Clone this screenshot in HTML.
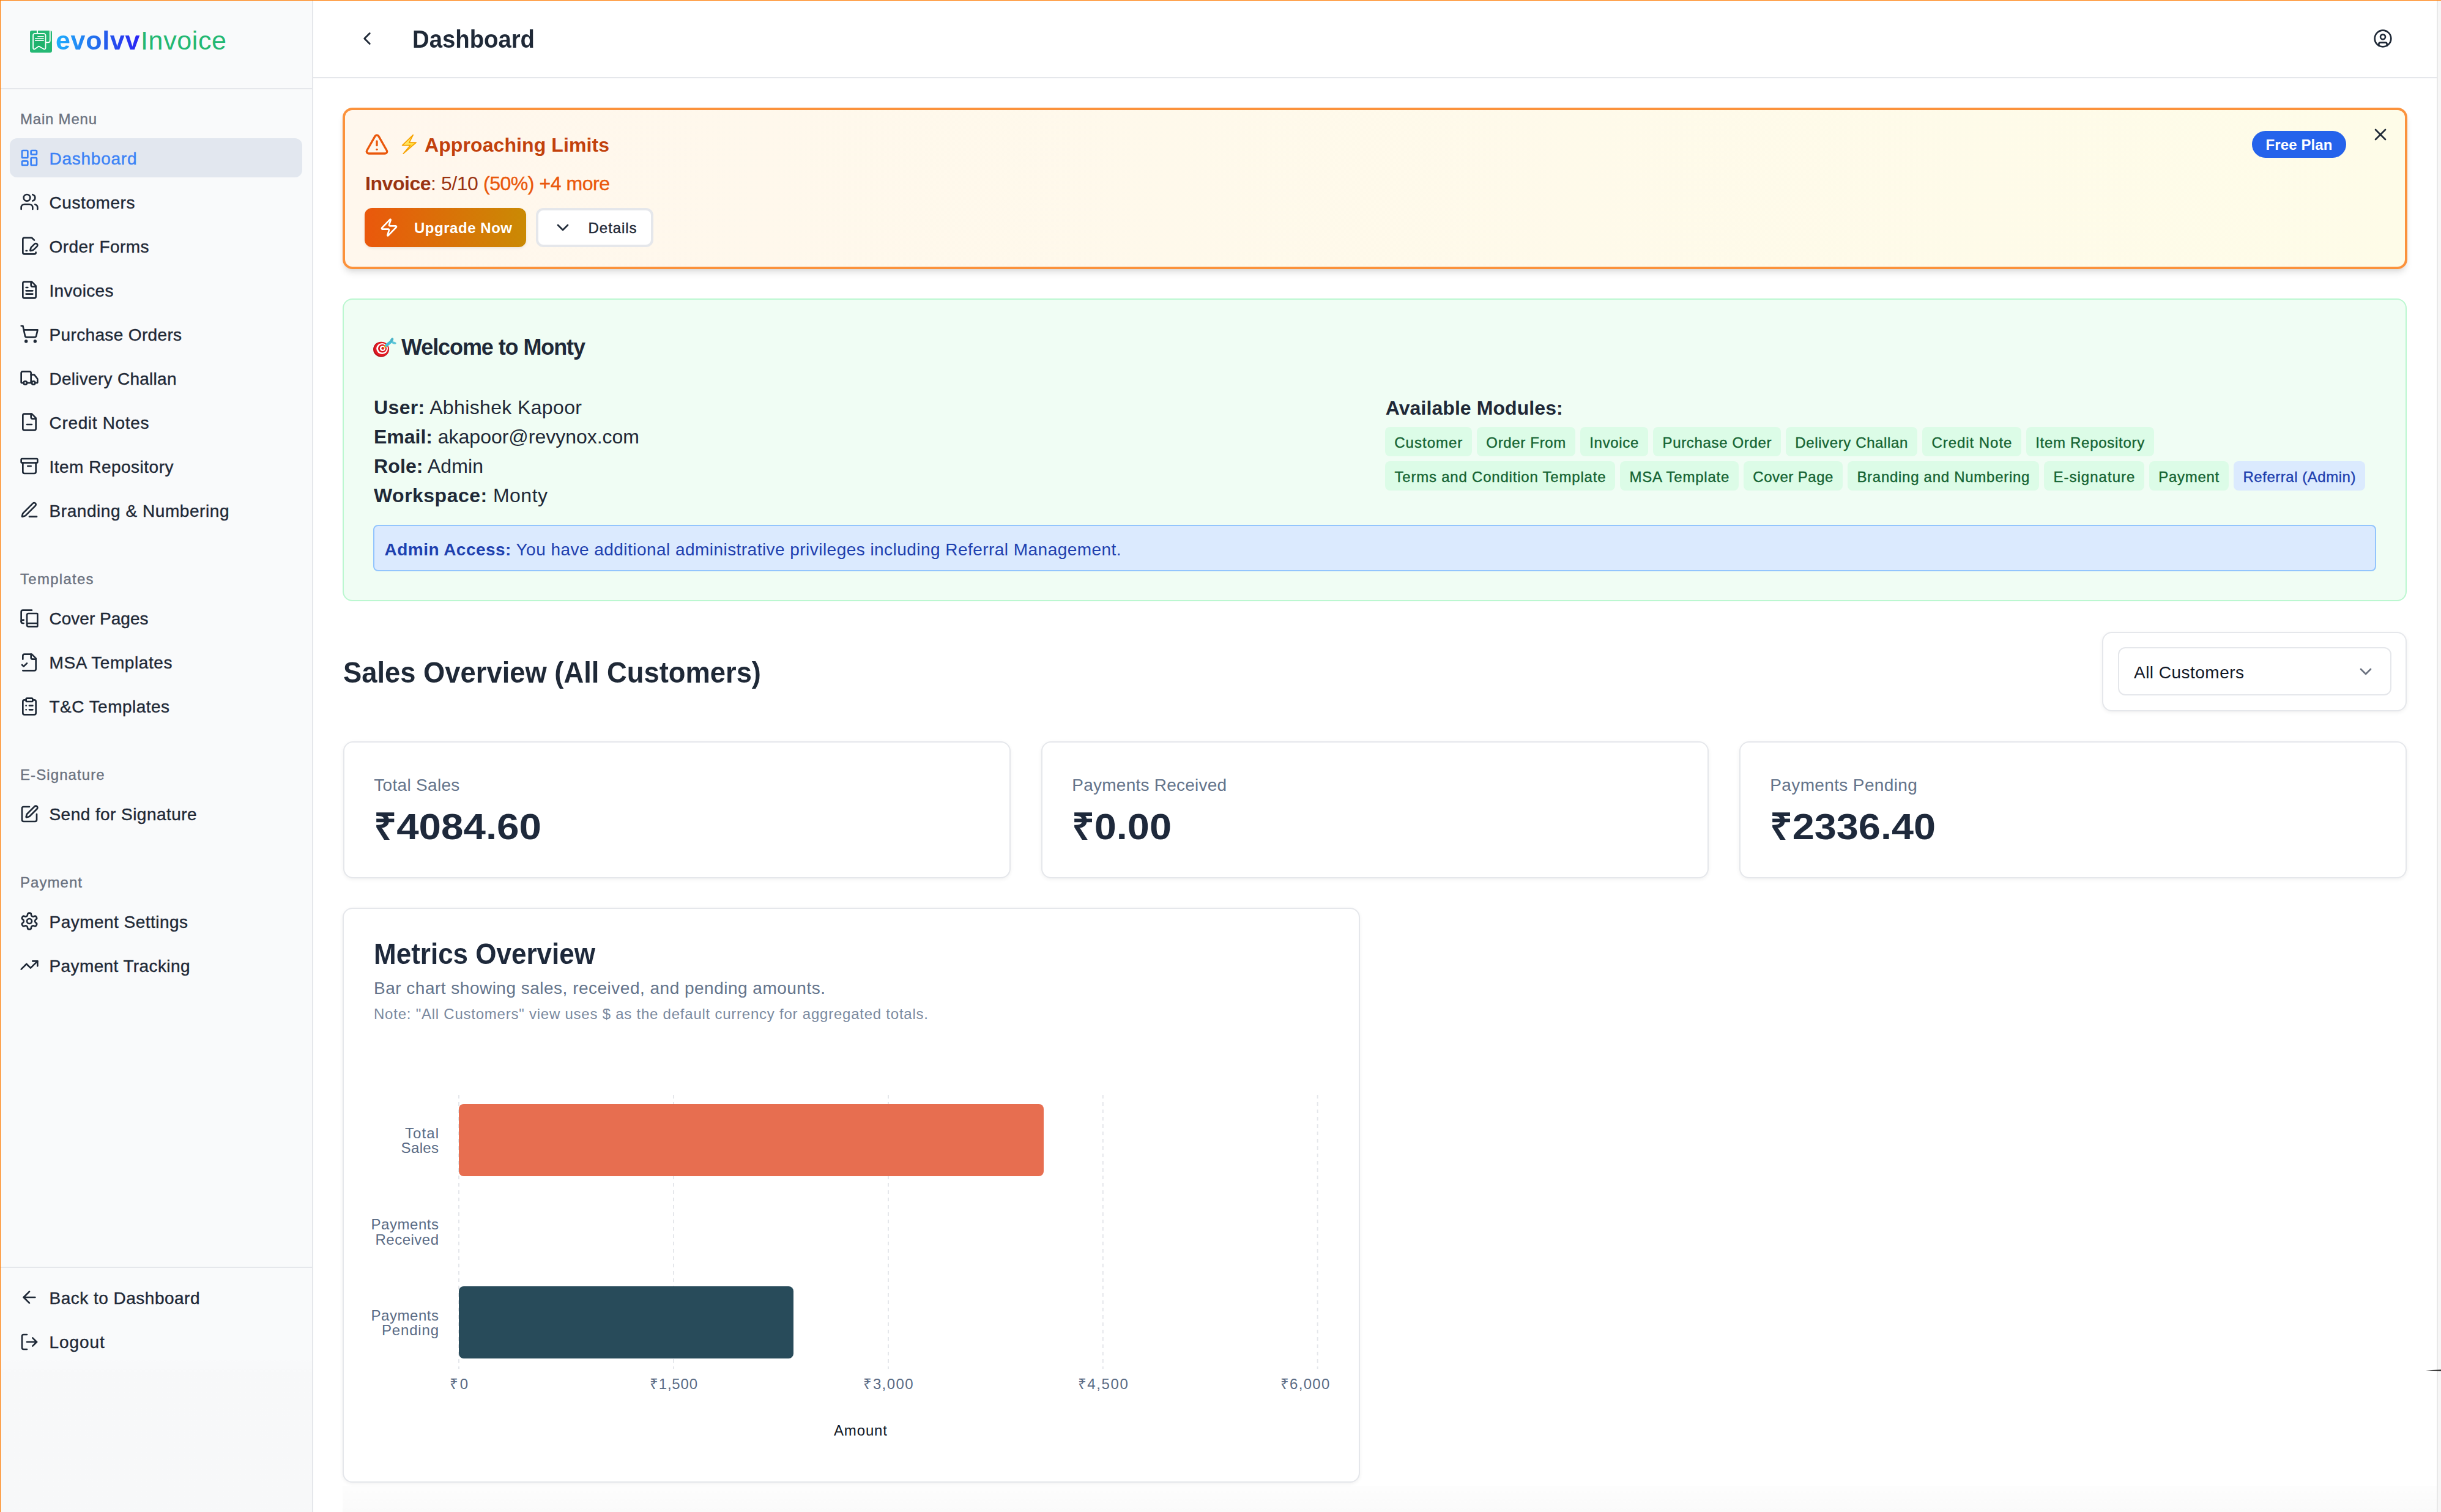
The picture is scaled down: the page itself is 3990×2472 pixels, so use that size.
<!DOCTYPE html>
<html><head><meta charset="utf-8"><title>Dashboard</title>
<style>
html,body{margin:0;padding:0;width:3990px;height:2472px;overflow:hidden;background:#fff}
body{position:relative;font-family:"Liberation Sans", sans-serif}
.a{position:absolute;display:block}
.t{position:absolute;white-space:nowrap}
b{font-weight:700}
@media (max-width:2600px){html{zoom:0.5}}
</style></head><body>
<div class="a" style="left:0px;top:0px;width:3990px;height:2472px;background:#ffffff"></div>
<div class="a" style="left:1px;top:1px;width:509px;height:2471px;background:#f9fafb"></div>
<div class="a" style="left:510px;top:1px;width:2px;height:2471px;background:#e5e7eb"></div>
<div class="a" style="left:1px;top:144px;width:509px;height:2px;background:#e5e7eb"></div>
<div class="a" style="left:1px;top:2071px;width:509px;height:2px;background:#e5e7eb"></div>
<div class="a" style="left:512px;top:126px;width:3471px;height:2px;background:#e5e7eb"></div>
<div class="a" style="left:3983px;top:1px;width:2px;height:2471px;background:#e8e8e8"></div>
<div class="a" style="left:3985px;top:1px;width:5px;height:2471px;background:#f6f6f6"></div>
<svg class="a" style="left:49px;top:50px" width="36" height="36" viewBox="0 0 36 36">
<rect x="0" y="0" width="36" height="36" rx="3.2" fill="#25b874"/>
<path d="M12 0 V4.6" stroke="#fff" stroke-width="1.9" fill="none"/>
<path d="M32.8 0 V16.2 A3.2 3.2 0 0 1 29.6 19.4 H25.6" stroke="#fff" stroke-width="1.8" fill="none"/>
<path d="M5.1 28.6 V8 A3.1 3.1 0 0 1 8.2 4.9 H22.4 A3.1 3.1 0 0 1 25.5 8 V28.6 A1.8 1.8 0 0 1 22.8 30.2 L14.3 25.6 L7.8 30.2 A1.8 1.8 0 0 1 5.1 28.6 Z" stroke="#fff" stroke-width="1.75" fill="#1fb26c" stroke-linejoin="round"/>
<path d="M12.8 9.6 H22.2 M8.6 12.8 H22.2 M8.6 16.2 H22.2" stroke="#fff" stroke-width="1.4" stroke-linecap="round"/>
</svg>
<div class="t" style="left:91px;top:36px;font-size:43px;line-height:60px;white-space:nowrap"><span style="font-weight:700;letter-spacing:0.7px;background:linear-gradient(90deg,#1fb0fe,#2563eb 55%,#2a22f5);-webkit-background-clip:text;background-clip:text;color:transparent">evolvv</span><span style="color:#23b873;letter-spacing:0.6px;margin-left:1px">Invoice</span></div>
<div class="t" id="t1" data-w="123" style="top:177.70px;font-size:24px;line-height:34px;color:#6b7280;left:33px;transform-origin:left center;letter-spacing:0.783px;-webkit-text-stroke-width:0.4px">Main Menu</div>
<div class="a" style="left:16px;top:226px;width:478px;height:64px;background:#e2e7ef;border-radius:12px"></div>
<svg class="a" style="left:32.00px;top:242.00px" width="32" height="32" viewBox="0 0 24 24" fill="none" stroke="#3b82f6" stroke-width="2" stroke-linecap="round" stroke-linejoin="round"><rect width="7" height="9" x="3" y="3" rx="1"/><rect width="7" height="5" x="14" y="3" rx="1"/><rect width="7" height="9" x="14" y="12" rx="1"/><rect width="7" height="5" x="3" y="16" rx="1"/></svg>
<div class="t" id="t2" data-w="141" style="top:239.50px;font-size:28px;line-height:39px;color:#3b82f6;left:80.5px;transform-origin:left center;letter-spacing:0.752px;-webkit-text-stroke-width:0.4px">Dashboard</div>
<svg class="a" style="left:32.00px;top:314.00px" width="32" height="32" viewBox="0 0 24 24" fill="none" stroke="#1f2937" stroke-width="2" stroke-linecap="round" stroke-linejoin="round"><path d="M16 21v-2a4 4 0 0 0-4-4H6a4 4 0 0 0-4 4v2"/><circle cx="9" cy="7" r="4"/><path d="M22 21v-2a4 4 0 0 0-3-3.87"/><path d="M16 3.13a4 4 0 0 1 0 7.75"/></svg>
<div class="t" id="t3" data-w="138" style="top:311.50px;font-size:28px;line-height:39px;color:#1f2937;left:80.5px;transform-origin:left center;letter-spacing:0.578px;-webkit-text-stroke-width:0.4px">Customers</div>
<svg class="a" style="left:32.00px;top:386.00px" width="32" height="32" viewBox="0 0 24 24" fill="none" stroke="#1f2937" stroke-width="2" stroke-linecap="round" stroke-linejoin="round"><path d="m18 5-2.414-2.414A2 2 0 0 0 14.172 2H6a2 2 0 0 0-2 2v16a2 2 0 0 0 2 2h12a2 2 0 0 0 2-2"/><path d="M21.378 12.626a1 1 0 0 0-3.004-3.004l-4.01 4.012a2 2 0 0 0-.506.854l-.837 2.87a.5.5 0 0 0 .62.62l2.87-.837a2 2 0 0 0 .854-.506z"/><path d="M8 18h1"/></svg>
<div class="t" id="t4" data-w="161" style="top:383.50px;font-size:28px;line-height:39px;color:#1f2937;left:80.5px;transform-origin:left center;letter-spacing:0.431px;-webkit-text-stroke-width:0.4px">Order Forms</div>
<svg class="a" style="left:32.00px;top:458.00px" width="32" height="32" viewBox="0 0 24 24" fill="none" stroke="#1f2937" stroke-width="2" stroke-linecap="round" stroke-linejoin="round"><path d="M15 2H6a2 2 0 0 0-2 2v16a2 2 0 0 0 2 2h12a2 2 0 0 0 2-2V7Z"/><path d="M14 2v4a2 2 0 0 0 2 2h4"/><path d="M10 9H8"/><path d="M16 13H8"/><path d="M16 17H8"/></svg>
<div class="t" id="t5" data-w="103" style="top:455.50px;font-size:28px;line-height:39px;color:#1f2937;left:80.5px;transform-origin:left center;letter-spacing:0.326px;-webkit-text-stroke-width:0.4px">Invoices</div>
<svg class="a" style="left:32.00px;top:530.00px" width="32" height="32" viewBox="0 0 24 24" fill="none" stroke="#1f2937" stroke-width="2" stroke-linecap="round" stroke-linejoin="round"><circle cx="8" cy="21" r="1"/><circle cx="19" cy="21" r="1"/><path d="M2.05 2.05h2l2.66 12.42a2 2 0 0 0 2 1.58h9.78a2 2 0 0 0 1.95-1.57l1.65-7.43H5.12"/></svg>
<div class="t" id="t6" data-w="214.6" style="top:527.50px;font-size:28px;line-height:39px;color:#1f2937;left:80.5px;transform-origin:left center;letter-spacing:0.354px;-webkit-text-stroke-width:0.4px">Purchase Orders</div>
<svg class="a" style="left:32.00px;top:602.00px" width="32" height="32" viewBox="0 0 24 24" fill="none" stroke="#1f2937" stroke-width="2" stroke-linecap="round" stroke-linejoin="round"><path d="M14 18V6a2 2 0 0 0-2-2H4a2 2 0 0 0-2 2v11a1 1 0 0 0 1 1h2"/><path d="M15 18H9"/><path d="M19 18h2a1 1 0 0 0 1-1v-3.65a1 1 0 0 0-.22-.624l-3.48-4.35A1 1 0 0 0 17.52 8H14"/><circle cx="17" cy="18" r="2"/><circle cx="7" cy="18" r="2"/></svg>
<div class="t" id="t7" data-w="206" style="top:599.50px;font-size:28px;line-height:39px;color:#1f2937;left:80.5px;transform-origin:left center;letter-spacing:0.275px;-webkit-text-stroke-width:0.4px">Delivery Challan</div>
<svg class="a" style="left:32.00px;top:674.00px" width="32" height="32" viewBox="0 0 24 24" fill="none" stroke="#1f2937" stroke-width="2" stroke-linecap="round" stroke-linejoin="round"><path d="M15 2H6a2 2 0 0 0-2 2v16a2 2 0 0 0 2 2h12a2 2 0 0 0 2-2V7Z"/><path d="M14 2v4a2 2 0 0 0 2 2h4"/><path d="M9 15h6"/></svg>
<div class="t" id="t8" data-w="161" style="top:671.50px;font-size:28px;line-height:39px;color:#1f2937;left:80.5px;transform-origin:left center;letter-spacing:0.670px;-webkit-text-stroke-width:0.4px">Credit Notes</div>
<svg class="a" style="left:32.00px;top:746.00px" width="32" height="32" viewBox="0 0 24 24" fill="none" stroke="#1f2937" stroke-width="2" stroke-linecap="round" stroke-linejoin="round"><rect width="20" height="5" x="2" y="3" rx="1"/><path d="M4 8v11a2 2 0 0 0 2 2h12a2 2 0 0 0 2-2V8"/><path d="M10 12h4"/></svg>
<div class="t" id="t9" data-w="201" style="top:743.50px;font-size:28px;line-height:39px;color:#1f2937;left:80.5px;transform-origin:left center;letter-spacing:0.494px;-webkit-text-stroke-width:0.4px">Item Repository</div>
<svg class="a" style="left:32.00px;top:818.00px" width="32" height="32" viewBox="0 0 24 24" fill="none" stroke="#1f2937" stroke-width="2" stroke-linecap="round" stroke-linejoin="round"><path d="M12 20h9"/><path d="M16.376 3.622a1 1 0 0 1 3.002 3.002L7.368 18.635a2 2 0 0 1-.855.506l-2.872.838a.5.5 0 0 1-.62-.62l.838-2.872a2 2 0 0 1 .506-.854z"/></svg>
<div class="t" id="t10" data-w="292" style="top:815.50px;font-size:28px;line-height:39px;color:#1f2937;left:80.5px;transform-origin:left center;letter-spacing:0.564px;-webkit-text-stroke-width:0.4px">Branding &amp; Numbering</div>
<div class="t" id="t11" data-w="117.6" style="top:930.00px;font-size:24px;line-height:34px;color:#6b7280;left:33px;transform-origin:left center;letter-spacing:1.276px;-webkit-text-stroke-width:0.4px">Templates</div>
<svg class="a" style="left:32.00px;top:994.90px" width="32" height="32" viewBox="0 0 24 24" fill="none" stroke="#1f2937" stroke-width="2" stroke-linecap="round" stroke-linejoin="round"><path d="M2 16V4a2 2 0 0 1 2-2h11"/><path d="M5 14H4a2 2 0 1 0 0 4h1"/><path d="M22 18H11a2 2 0 1 0 0 4h10.5a.5.5 0 0 0 .5-.5v-15a.5.5 0 0 0-.5-.5H11a2 2 0 0 0-2 2v12"/></svg>
<div class="t" id="t12" data-w="160" style="top:992.40px;font-size:28px;line-height:39px;color:#1f2937;left:80.5px;transform-origin:left center;letter-spacing:0.013px;-webkit-text-stroke-width:0.4px">Cover Pages</div>
<svg class="a" style="left:32.00px;top:1066.90px" width="32" height="32" viewBox="0 0 24 24" fill="none" stroke="#1f2937" stroke-width="2" stroke-linecap="round" stroke-linejoin="round"><path d="M4 22h14a2 2 0 0 0 2-2V7l-5-5H6a2 2 0 0 0-2 2v4"/><path d="M14 2v4a2 2 0 0 0 2 2h4"/><path d="m3 15 2 2 4-4"/></svg>
<div class="t" id="t13" data-w="199" style="top:1064.40px;font-size:28px;line-height:39px;color:#1f2937;left:80.5px;transform-origin:left center;letter-spacing:0.581px;-webkit-text-stroke-width:0.4px">MSA Templates</div>
<svg class="a" style="left:32.00px;top:1138.90px" width="32" height="32" viewBox="0 0 24 24" fill="none" stroke="#1f2937" stroke-width="2" stroke-linecap="round" stroke-linejoin="round"><rect width="8" height="4" x="8" y="2" rx="1" ry="1"/><path d="M16 4h2a2 2 0 0 1 2 2v14a2 2 0 0 1-2 2H6a2 2 0 0 1-2-2V6a2 2 0 0 1 2-2h2"/><path d="M12 11h4"/><path d="M12 16h4"/><path d="M8 11h.01"/><path d="M8 16h.01"/></svg>
<div class="t" id="t14" data-w="194.5" style="top:1136.40px;font-size:28px;line-height:39px;color:#1f2937;left:80.5px;transform-origin:left center;letter-spacing:0.467px;-webkit-text-stroke-width:0.4px">T&amp;C Templates</div>
<div class="t" id="t15" data-w="135.7" style="top:1250.10px;font-size:24px;line-height:34px;color:#6b7280;left:33px;transform-origin:left center;letter-spacing:1.095px;-webkit-text-stroke-width:0.4px">E-Signature</div>
<svg class="a" style="left:32.00px;top:1314.50px" width="32" height="32" viewBox="0 0 24 24" fill="none" stroke="#1f2937" stroke-width="2" stroke-linecap="round" stroke-linejoin="round"><path d="M12 3H5a2 2 0 0 0-2 2v14a2 2 0 0 0 2 2h14a2 2 0 0 0 2-2v-7"/><path d="M18.375 2.625a1 1 0 0 1 3 3l-9.013 9.014a2 2 0 0 1-.853.505l-2.873.84a.5.5 0 0 1-.62-.62l.84-2.873a2 2 0 0 1 .506-.852z"/></svg>
<div class="t" id="t16" data-w="239" style="top:1312.00px;font-size:28px;line-height:39px;color:#1f2937;left:80.5px;transform-origin:left center;letter-spacing:0.441px;-webkit-text-stroke-width:0.4px">Send for Signature</div>
<div class="t" id="t17" data-w="99" style="top:1425.90px;font-size:24px;line-height:34px;color:#6b7280;left:33px;transform-origin:left center;letter-spacing:1.047px;-webkit-text-stroke-width:0.4px">Payment</div>
<svg class="a" style="left:32.00px;top:1490.40px" width="32" height="32" viewBox="0 0 24 24" fill="none" stroke="#1f2937" stroke-width="2" stroke-linecap="round" stroke-linejoin="round"><path d="M12.22 2h-.44a2 2 0 0 0-2 2v.18a2 2 0 0 1-1 1.73l-.43.25a2 2 0 0 1-2 0l-.15-.08a2 2 0 0 0-2.73.73l-.22.38a2 2 0 0 0 .73 2.73l.15.1a2 2 0 0 1 1 1.72v.51a2 2 0 0 1-1 1.74l-.15.09a2 2 0 0 0-.73 2.73l.22.38a2 2 0 0 0 2.73.73l.15-.08a2 2 0 0 1 2 0l.43.25a2 2 0 0 1 1 1.73V20a2 2 0 0 0 2 2h.44a2 2 0 0 0 2-2v-.18a2 2 0 0 1 1-1.73l.43-.25a2 2 0 0 1 2 0l.15.08a2 2 0 0 0 2.73-.73l.22-.39a2 2 0 0 0-.73-2.73l-.15-.08a2 2 0 0 1-1-1.74v-.5a2 2 0 0 1 1-1.74l.15-.09a2 2 0 0 0 .73-2.73l-.22-.38a2 2 0 0 0-2.73-.73l-.15.08a2 2 0 0 1-2 0l-.43-.25a2 2 0 0 1-1-1.73V4a2 2 0 0 0-2-2z"/><circle cx="12" cy="12" r="3"/></svg>
<div class="t" id="t18" data-w="224.6" style="top:1487.90px;font-size:28px;line-height:39px;color:#1f2937;left:80.5px;transform-origin:left center;letter-spacing:0.476px;-webkit-text-stroke-width:0.4px">Payment Settings</div>
<svg class="a" style="left:32.00px;top:1562.40px" width="32" height="32" viewBox="0 0 24 24" fill="none" stroke="#1f2937" stroke-width="2" stroke-linecap="round" stroke-linejoin="round"><polyline points="22 7 13.5 15.5 8.5 10.5 2 17"/><polyline points="16 7 22 7 22 13"/></svg>
<div class="t" id="t19" data-w="228" style="top:1559.90px;font-size:28px;line-height:39px;color:#1f2937;left:80.5px;transform-origin:left center;letter-spacing:0.393px;-webkit-text-stroke-width:0.4px">Payment Tracking</div>
<svg class="a" style="left:32.00px;top:2105.40px" width="32" height="32" viewBox="0 0 24 24" fill="none" stroke="#1f2937" stroke-width="2" stroke-linecap="round" stroke-linejoin="round"><path d="m12 19-7-7 7-7"/><path d="M19 12H5"/></svg>
<div class="t" id="t20" data-w="244" style="top:2102.90px;font-size:28px;line-height:39px;color:#1f2937;left:80.5px;transform-origin:left center;letter-spacing:0.491px;-webkit-text-stroke-width:0.4px">Back to Dashboard</div>
<svg class="a" style="left:32.00px;top:2177.70px" width="32" height="32" viewBox="0 0 24 24" fill="none" stroke="#1f2937" stroke-width="2" stroke-linecap="round" stroke-linejoin="round"><path d="M9 21H5a2 2 0 0 1-2-2V5a2 2 0 0 1 2-2h4"/><polyline points="16 17 21 12 16 7"/><line x1="21" x2="9" y1="12" y2="12"/></svg>
<div class="t" id="t21" data-w="88.4" style="top:2175.20px;font-size:28px;line-height:39px;color:#1f2937;left:80.5px;transform-origin:left center;letter-spacing:0.952px;-webkit-text-stroke-width:0.4px">Logout</div>
<svg class="a" style="left:583.00px;top:46.00px" width="34" height="34" viewBox="0 0 24 24" fill="none" stroke="#1f2937" stroke-width="2" stroke-linecap="round" stroke-linejoin="round"><path d="m15 18-6-6 6-6"/></svg>
<div class="t" id="t22" data-w="198" style="top:36.00px;font-size:40px;line-height:56px;color:#1f2937;font-weight:700;left:674px;transform-origin:left center;transform:scaleX(0.9572)">Dashboard</div>
<svg class="a" style="left:3879.00px;top:46.60px" width="32" height="32" viewBox="0 0 24 24" fill="none" stroke="#1f2937" stroke-width="2" stroke-linecap="round" stroke-linejoin="round"><circle cx="12" cy="12" r="10"/><circle cx="12" cy="10" r="3"/><path d="M7 20.662V19a2 2 0 0 1 2-2h6a2 2 0 0 1 2 2v1.662"/></svg>
<div class="a" style="left:560px;top:176px;width:3375px;height:264px;background:linear-gradient(90deg,#fff7ed,#fefce8);border:4px solid #fb923c;border-radius:16px;box-sizing:border-box;box-shadow:0 8px 12px -2px rgba(0,0,0,0.1), 0 4px 8px -4px rgba(0,0,0,0.1)"></div>
<svg class="a" style="left:595.50px;top:216.00px" width="40" height="40" viewBox="0 0 24 24" fill="none" stroke="#ea580c" stroke-width="2" stroke-linecap="round" stroke-linejoin="round"><path d="m21.73 18-8-14a2 2 0 0 0-3.48 0l-8 14A2 2 0 0 0 4 21h16a2 2 0 0 0 1.73-3"/><path d="M12 9v4"/><path d="M12 17h.01"/></svg>
<svg class="a" style="left:655px;top:219px" width="28" height="34" viewBox="0 0 28 34">
<defs><linearGradient id="zg" x1="0" y1="0" x2="1" y2="1"><stop offset="0" stop-color="#fff3b0"/><stop offset="0.5" stop-color="#ffe14d"/><stop offset="1" stop-color="#ffc400"/></linearGradient></defs>
<path d="M20.2 1.6 L2.6 18.7 L15.6 18.7 L4.2 32.2 L25.1 14.1 L13.9 14.1 Z" fill="url(#zg)" stroke="#f7a300" stroke-width="1.7" stroke-linejoin="round"/>
</svg>
<div class="t" id="t23" data-w="300" style="top:214.60px;font-size:32px;line-height:45px;color:#c2410c;font-weight:700;left:694px;transform-origin:left center;letter-spacing:0.091px">Approaching Limits</div>
<div class="t" id="t24" data-w="398" style="top:278.30px;font-size:32px;line-height:45px;color:#9a3412;left:597px;transform-origin:left center;letter-spacing:-0.452px"><b style="color:#9a3412">Invoice</b><span style="color:#9a3412">: 5/10</span> <span style="color:#ea580c;-webkit-text-stroke:0.4px #ea580c">(50%)</span> <span style="color:#ea580c;-webkit-text-stroke:0.4px #ea580c">+4 more</span></div>
<div class="a" style="left:596px;top:340px;width:264px;height:64px;background:linear-gradient(90deg,#ea580c,#ca8a04);border-radius:12px;box-shadow:0 2px 4px rgba(0,0,0,0.08)"></div>
<svg class="a" style="left:620.00px;top:356.20px" width="32" height="32" viewBox="0 0 24 24" fill="none" stroke="#ffffff" stroke-width="2" stroke-linecap="round" stroke-linejoin="round"><path d="M4 14a1 1 0 0 1-.78-1.63l9.9-10.2a.5.5 0 0 1 .86.46l-1.92 6.02A1 1 0 0 0 13 10h7a1 1 0 0 1 .78 1.63l-9.9 10.2a.5.5 0 0 1-.86-.46l1.92-6.02A1 1 0 0 0 11 14z"/></svg>
<div class="t" id="t25" data-w="158" style="top:356.20px;font-size:24px;line-height:34px;color:#ffffff;font-weight:700;left:677px;transform-origin:left center;letter-spacing:0.531px">Upgrade Now</div>
<div class="a" style="left:876px;top:340px;width:192px;height:64px;background:#ffffff;border:4px solid #e5e7eb;border-radius:12px;box-sizing:border-box"></div>
<svg class="a" style="left:904.00px;top:356.00px" width="32" height="32" viewBox="0 0 24 24" fill="none" stroke="#1f2937" stroke-width="2" stroke-linecap="round" stroke-linejoin="round"><path d="m6 9 6 6 6-6"/></svg>
<div class="t" id="t26" data-w="77" style="top:356.20px;font-size:24px;line-height:34px;color:#1f2937;left:961.6px;transform-origin:left center;letter-spacing:0.940px;-webkit-text-stroke-width:0.4px">Details</div>
<div class="a" style="left:3681px;top:214px;width:154px;height:44px;background:#2563eb;border-radius:22px"></div>
<div class="t" id="t27" data-w="107" style="top:219.60px;font-size:24px;line-height:34px;color:#ffffff;font-weight:700;left:3758.06px;transform:translateX(-50%);letter-spacing:0.119px">Free Plan</div>
<svg class="a" style="left:3875.00px;top:204.00px" width="32" height="32" viewBox="0 0 24 24" fill="none" stroke="#1f2937" stroke-width="2" stroke-linecap="round" stroke-linejoin="round"><path d="M18 6 6 18"/><path d="m6 6 12 12"/></svg>
<div class="a" style="left:560px;top:488px;width:3374px;height:495px;background:#f0fdf4;border:2px solid #bbf7d0;border-radius:16px;box-sizing:border-box"></div>
<svg class="a" style="left:608px;top:550px" width="42" height="36" viewBox="0 0 42 36">
<ellipse cx="15" cy="21.2" rx="12.9" ry="12.5" fill="#b50f18"/>
<ellipse cx="15.8" cy="20.6" rx="12" ry="11.6" fill="#e31b23"/>
<ellipse cx="16.6" cy="20" rx="9.4" ry="9" fill="#ffffff"/>
<ellipse cx="17" cy="19.8" rx="7" ry="6.8" fill="#d8141c"/>
<ellipse cx="17.4" cy="19.6" rx="4.6" ry="4.4" fill="#ffffff"/>
<ellipse cx="17.8" cy="19.4" rx="2.4" ry="2.3" fill="#d8141c"/>
<path d="M17.8 19.4 L22 16" stroke="#e0a800" stroke-width="1.2"/>
<circle cx="21.8" cy="16" r="1.8" fill="#f2c200"/>
<path d="M23.5 14.6 L31.5 8.2" stroke="#45bfd6" stroke-width="4.6" stroke-linecap="round"/>
<ellipse cx="32.4" cy="5.8" rx="3.8" ry="2.3" transform="rotate(-62 32.4 5.8)" fill="#4ab4c8"/>
<ellipse cx="36" cy="10.6" rx="3.8" ry="1.9" transform="rotate(18 36 10.6)" fill="#5cc6d8"/>
</svg>
<div class="t" id="t28" data-w="299" style="top:543.00px;font-size:36px;line-height:50px;color:#1f2937;font-weight:700;left:656px;transform-origin:left center;letter-spacing:-1.091px">Welcome to Monty</div>
<div class="t" id="t29" data-w="338" style="top:644.30px;font-size:32px;line-height:45px;color:#1f2937;left:611px;transform-origin:left center;letter-spacing:0.367px"><b>User:</b> Abhishek Kapoor</div>
<div class="t" id="t30" data-w="432" style="top:692.00px;font-size:32px;line-height:45px;color:#1f2937;left:611px;transform-origin:left center;letter-spacing:-0.018px"><b>Email:</b> akapoor@revynox.com</div>
<div class="t" id="t31" data-w="177" style="top:740.30px;font-size:32px;line-height:45px;color:#1f2937;left:611px;transform-origin:left center;letter-spacing:0.117px"><b>Role:</b> Admin</div>
<div class="t" id="t32" data-w="282" style="top:788.00px;font-size:32px;line-height:45px;color:#1f2937;left:611px;transform-origin:left center;letter-spacing:0.477px"><b>Workspace:</b> Monty</div>
<div class="t" id="t33" data-w="288" style="top:644.60px;font-size:32px;line-height:45px;color:#1f2937;font-weight:700;left:2264.7px;transform-origin:left center;letter-spacing:0.079px">Available Modules:</div>
<div class="a" style="left:2264px;top:698px;width:142px;height:48px;background:#dcfce7;border-radius:8px"></div>
<div class="t" id="t34" data-w="109" style="top:707.10px;font-size:24px;line-height:34px;color:#166534;left:2335.30px;transform:translateX(-50%);letter-spacing:0.996px;-webkit-text-stroke-width:0.4px">Customer</div>
<div class="a" style="left:2414px;top:698px;width:161px;height:48px;background:#dcfce7;border-radius:8px"></div>
<div class="t" id="t35" data-w="128" style="top:707.10px;font-size:24px;line-height:34px;color:#166534;left:2494.68px;transform:translateX(-50%);letter-spacing:0.665px;-webkit-text-stroke-width:0.4px">Order From</div>
<div class="a" style="left:2583px;top:698px;width:111px;height:48px;background:#dcfce7;border-radius:8px"></div>
<div class="t" id="t36" data-w="78" style="top:707.10px;font-size:24px;line-height:34px;color:#166534;left:2638.63px;transform:translateX(-50%);letter-spacing:0.659px;-webkit-text-stroke-width:0.4px">Invoice</div>
<div class="a" style="left:2702px;top:698px;width:209px;height:48px;background:#dcfce7;border-radius:8px"></div>
<div class="t" id="t37" data-w="176" style="top:707.10px;font-size:24px;line-height:34px;color:#166534;left:2806.83px;transform:translateX(-50%);letter-spacing:0.661px;-webkit-text-stroke-width:0.4px">Purchase Order</div>
<div class="a" style="left:2919px;top:698px;width:215px;height:48px;background:#dcfce7;border-radius:8px"></div>
<div class="t" id="t38" data-w="182" style="top:707.10px;font-size:24px;line-height:34px;color:#166534;left:3026.61px;transform:translateX(-50%);letter-spacing:0.617px;-webkit-text-stroke-width:0.4px">Delivery Challan</div>
<div class="a" style="left:3142px;top:698px;width:162px;height:48px;background:#dcfce7;border-radius:8px"></div>
<div class="t" id="t39" data-w="129" style="top:707.10px;font-size:24px;line-height:34px;color:#166534;left:3223.38px;transform:translateX(-50%);letter-spacing:0.961px;-webkit-text-stroke-width:0.4px">Credit Note</div>
<div class="a" style="left:3312px;top:698px;width:209px;height:48px;background:#dcfce7;border-radius:8px"></div>
<div class="t" id="t40" data-w="176" style="top:707.10px;font-size:24px;line-height:34px;color:#166534;left:3416.55px;transform:translateX(-50%);letter-spacing:0.710px;-webkit-text-stroke-width:0.4px">Item Repository</div>
<div class="a" style="left:2264px;top:754px;width:376px;height:48px;background:#dcfce7;border-radius:8px"></div>
<div class="t" id="t41" data-w="343" style="top:763.10px;font-size:24px;line-height:34px;color:#166534;left:2452.39px;transform:translateX(-50%);letter-spacing:0.788px;-webkit-text-stroke-width:0.4px">Terms and Condition Template</div>
<div class="a" style="left:2648px;top:754px;width:194px;height:48px;background:#dcfce7;border-radius:8px"></div>
<div class="t" id="t42" data-w="161" style="top:763.10px;font-size:24px;line-height:34px;color:#166534;left:2745.29px;transform:translateX(-50%);letter-spacing:0.790px;-webkit-text-stroke-width:0.4px">MSA Template</div>
<div class="a" style="left:2850px;top:754px;width:162px;height:48px;background:#dcfce7;border-radius:8px"></div>
<div class="t" id="t43" data-w="129" style="top:763.10px;font-size:24px;line-height:34px;color:#166534;left:2931.09px;transform:translateX(-50%);letter-spacing:0.472px;-webkit-text-stroke-width:0.4px">Cover Page</div>
<div class="a" style="left:3020px;top:754px;width:313px;height:48px;background:#dcfce7;border-radius:8px"></div>
<div class="t" id="t44" data-w="280" style="top:763.10px;font-size:24px;line-height:34px;color:#166534;left:3176.76px;transform:translateX(-50%);letter-spacing:0.722px;-webkit-text-stroke-width:0.4px">Branding and Numbering</div>
<div class="a" style="left:3341px;top:754px;width:164px;height:48px;background:#dcfce7;border-radius:8px"></div>
<div class="t" id="t45" data-w="131" style="top:763.10px;font-size:24px;line-height:34px;color:#166534;left:3423.41px;transform:translateX(-50%);letter-spacing:1.027px;-webkit-text-stroke-width:0.4px">E-signature</div>
<div class="a" style="left:3513px;top:754px;width:130px;height:48px;background:#dcfce7;border-radius:8px"></div>
<div class="t" id="t46" data-w="97" style="top:763.10px;font-size:24px;line-height:34px;color:#166534;left:3578.06px;transform:translateX(-50%);letter-spacing:0.714px;-webkit-text-stroke-width:0.4px">Payment</div>
<div class="a" style="left:3651px;top:754px;width:215px;height:48px;background:#dbeafe;border-radius:8px"></div>
<div class="t" id="t47" data-w="182" style="top:763.10px;font-size:24px;line-height:34px;color:#1e40af;left:3758.77px;transform:translateX(-50%);letter-spacing:0.530px;-webkit-text-stroke-width:0.4px">Referral (Admin)</div>
<div class="a" style="left:610px;top:858px;width:3274px;height:76px;background:#dbeafe;border:2px solid #93c5fd;border-radius:8px;box-sizing:border-box"></div>
<div class="t" id="t48" data-w="1202" style="top:878.50px;font-size:28px;line-height:39px;color:#1e40af;left:628.6px;transform-origin:left center;letter-spacing:0.459px"><b>Admin Access:</b> You have additional administrative privileges including Referral Management.</div>
<div class="t" id="t49" data-w="681" style="top:1065.70px;font-size:48px;line-height:67px;color:#1f2937;font-weight:700;left:561px;transform-origin:left center;transform:scaleX(0.9447)">Sales Overview (All Customers)</div>
<div class="a" style="left:3436px;top:1033px;width:498px;height:130px;background:#ffffff;border:2px solid #e5e7eb;border-radius:16px;box-sizing:border-box;box-shadow:0 2px 6px rgba(0,0,0,0.06)"></div>
<div class="a" style="left:3461.5px;top:1058px;width:447.0px;height:79px;background:#ffffff;border:2px solid #e5e7eb;border-radius:12px;box-sizing:border-box"></div>
<div class="t" id="t50" data-w="178" style="top:1079.70px;font-size:28px;line-height:39px;color:#111827;left:3488px;transform-origin:left center;letter-spacing:0.478px">All Customers</div>
<svg class="a" style="left:3851.00px;top:1081.50px" width="32" height="32" viewBox="0 0 24 24" fill="none" stroke="#6b7280" stroke-width="2" stroke-linecap="round" stroke-linejoin="round"><path d="m6 9 6 6 6-6"/></svg>
<div class="a" style="left:560.5px;top:1212px;width:1091.5px;height:224px;background:#ffffff;border:2px solid #e5e7eb;border-radius:16px;box-sizing:border-box;box-shadow:0 2px 6px rgba(0,0,0,0.06)"></div>
<div class="t" id="t51" data-w="138" style="top:1264.30px;font-size:28px;line-height:39px;color:#64748b;left:611.3px;transform-origin:left center;letter-spacing:0.303px">Total Sales</div>
<div class="t" id="t52" data-w="272" style="top:1310.00px;font-size:60px;line-height:84px;color:#1e293b;font-weight:700;left:611.3px;transform-origin:left center;transform:scaleX(1.0921)">₹4084.60</div>
<div class="a" style="left:1701.5px;top:1212px;width:1091.5px;height:224px;background:#ffffff;border:2px solid #e5e7eb;border-radius:16px;box-sizing:border-box;box-shadow:0 2px 6px rgba(0,0,0,0.06)"></div>
<div class="t" id="t53" data-w="250.8" style="top:1264.30px;font-size:28px;line-height:39px;color:#64748b;left:1752.3px;transform-origin:left center;letter-spacing:0.237px">Payments Received</div>
<div class="t" id="t54" data-w="161" style="top:1310.00px;font-size:60px;line-height:84px;color:#1e293b;font-weight:700;left:1752.3px;transform-origin:left center;transform:scaleX(1.0810)">₹0.00</div>
<div class="a" style="left:2842.5px;top:1212px;width:1091.5px;height:224px;background:#ffffff;border:2px solid #e5e7eb;border-radius:16px;box-sizing:border-box;box-shadow:0 2px 6px rgba(0,0,0,0.06)"></div>
<div class="t" id="t55" data-w="238.5" style="top:1264.30px;font-size:28px;line-height:39px;color:#64748b;left:2893.3px;transform-origin:left center;letter-spacing:0.364px">Payments Pending</div>
<div class="t" id="t56" data-w="269" style="top:1310.00px;font-size:60px;line-height:84px;color:#1e293b;font-weight:700;left:2893.3px;transform-origin:left center;transform:scaleX(1.0802)">₹2336.40</div>
<div class="a" style="left:560px;top:1484px;width:1663px;height:940px;background:#ffffff;border:2px solid #e5e7eb;border-radius:16px;box-sizing:border-box;box-shadow:0 2px 6px rgba(0,0,0,0.06)"></div>
<div class="t" id="t57" data-w="360" style="top:1526.10px;font-size:48px;line-height:67px;color:#1e293b;font-weight:700;left:611px;transform-origin:left center;transform:scaleX(0.9167)">Metrics Overview</div>
<div class="t" id="t58" data-w="736" style="top:1595.70px;font-size:28px;line-height:39px;color:#64748b;left:611px;transform-origin:left center;letter-spacing:0.494px">Bar chart showing sales, received, and pending amounts.</div>
<div class="t" id="t59" data-w="904" style="top:1641.30px;font-size:24px;line-height:34px;color:#7b8aa0;left:611px;transform-origin:left center;letter-spacing:0.766px">Note: "All Customers" view uses $ as the default currency for aggregated totals.</div>
<svg class="a" style="left:560px;top:1484px" width="1663" height="940"><g stroke="#e5e7eb" stroke-width="2" stroke-dasharray="6 6"><line x1="190" y1="306" x2="190" y2="754"/><line x1="541" y1="306" x2="541" y2="754"/><line x1="892" y1="306" x2="892" y2="754"/><line x1="1242.8" y1="306" x2="1242.8" y2="754"/><line x1="1593.6999999999998" y1="306" x2="1593.6999999999998" y2="754"/></g></svg>
<div class="a" style="left:750px;top:1805px;width:956px;height:118px;background:#e76e50;border-radius:8px"></div>
<div class="a" style="left:750px;top:2103px;width:547px;height:118px;background:#284b5a;border-radius:8px"></div>
<div class="t" id="t60" data-w="53" style="top:1835.60px;font-size:24px;line-height:34px;color:#5a6b85;right:3271.93px;transform-origin:right center;letter-spacing:1.074px">Total</div>
<div class="t" id="t61" data-w="59.4" style="top:1859.60px;font-size:24px;line-height:34px;color:#5a6b85;right:3272.66px;transform-origin:right center;letter-spacing:0.338px">Sales</div>
<div class="t" id="t62" data-w="108.5" style="top:1985.00px;font-size:24px;line-height:34px;color:#5a6b85;right:3272.46px;transform-origin:right center;letter-spacing:0.540px">Payments</div>
<div class="t" id="t63" data-w="101.5" style="top:2009.60px;font-size:24px;line-height:34px;color:#5a6b85;right:3272.51px;transform-origin:right center;letter-spacing:0.491px">Received</div>
<div class="t" id="t64" data-w="108.5" style="top:2133.60px;font-size:24px;line-height:34px;color:#5a6b85;right:3272.46px;transform-origin:right center;letter-spacing:0.540px">Payments</div>
<div class="t" id="t65" data-w="91" style="top:2158.30px;font-size:24px;line-height:34px;color:#5a6b85;right:3272.18px;transform-origin:right center;letter-spacing:0.820px">Pending</div>
<div class="t" id="t66" data-w="28" style="top:2245.60px;font-size:24px;line-height:34px;color:#5a6b85;left:751.32px;transform:translateX(-50%);letter-spacing:2.641px">₹0</div>
<div class="t" id="t67" data-w="76" style="top:2245.60px;font-size:24px;line-height:34px;color:#5a6b85;left:1101.39px;transform:translateX(-50%);letter-spacing:0.787px">₹1,500</div>
<div class="t" id="t68" data-w="79" style="top:2245.60px;font-size:24px;line-height:34px;color:#5a6b85;left:1452.69px;transform:translateX(-50%);letter-spacing:1.387px">₹3,000</div>
<div class="t" id="t69" data-w="80" style="top:2245.60px;font-size:24px;line-height:34px;color:#5a6b85;left:1803.59px;transform:translateX(-50%);letter-spacing:1.587px">₹4,500</div>
<div class="t" id="t70" data-w="78.7" style="top:2245.60px;font-size:24px;line-height:34px;color:#5a6b85;left:2133.66px;transform:translateX(-50%);letter-spacing:1.328px">₹6,000</div>
<div class="t" id="t71" data-w="85" style="top:2321.60px;font-size:24px;line-height:34px;color:#111827;left:1363px;transform-origin:left center;letter-spacing:0.856px">Amount</div>
<div class="a" style="left:1px;top:2215px;width:509px;height:257px;background:linear-gradient(180deg,rgba(0,0,0,0) 0px,rgba(0,0,0,0.009) 30px,rgba(0,0,0,0.009) 100%)"></div>
<div class="a" style="left:560px;top:2430px;width:3423px;height:42px;background:linear-gradient(180deg,rgba(0,0,0,0.006),rgba(0,0,0,0.02))"></div>
<svg class="a" style="left:3960px;top:2236px" width="30" height="8" viewBox="0 0 30 8"><path d="M5 4.6 L30 3.2 L30 5.6 Z" fill="#222"/></svg>
<div class="a" style="left:0px;top:0px;width:3990px;height:1px;background:#ff7a00"></div>
<div class="a" style="left:0px;top:0px;width:1px;height:2472px;background:#ff7a00"></div>
</body></html>
